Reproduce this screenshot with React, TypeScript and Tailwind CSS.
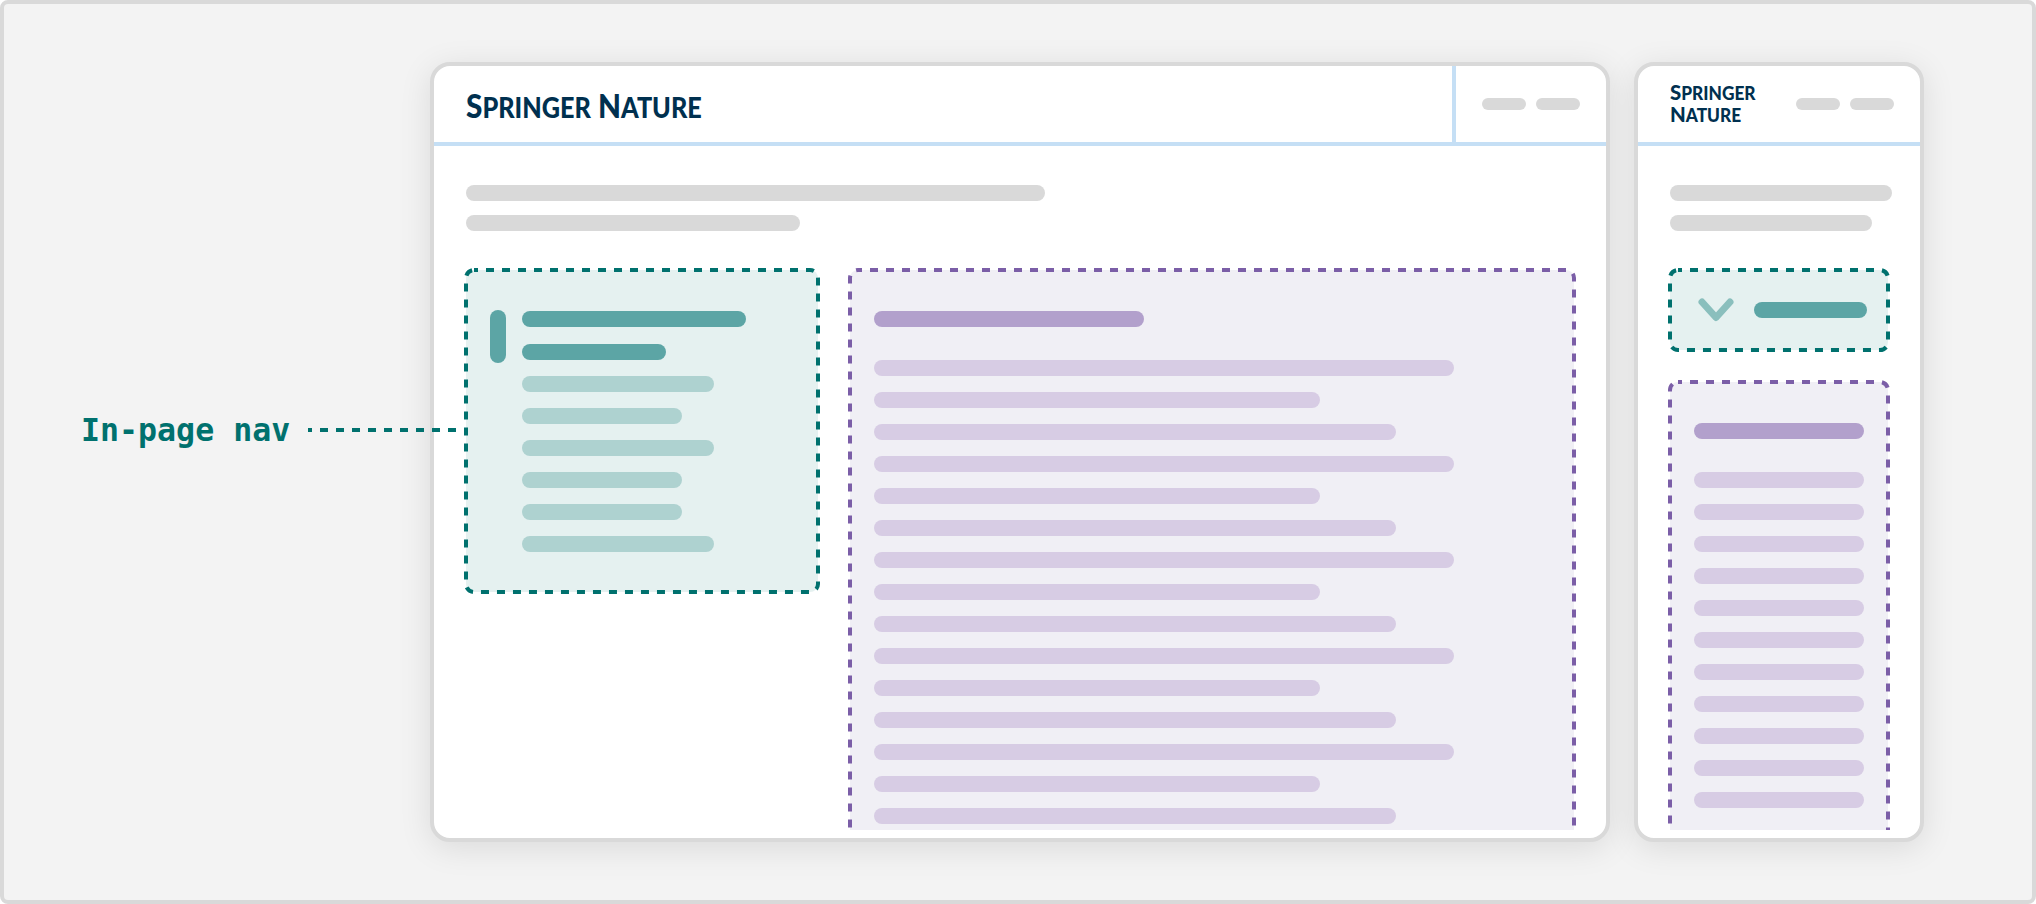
const teal = [192, 160, 192, 160, 160, 192]
const longLines = [580, 446, 522, 580, 446, 522, 580, 446, 522, 580, 446, 522, 580, 446, 522]
const shortLines = Array.from({ length: 11 }, () => 170)

// 8/8 dash stroke centred on the box edge, css dashed can't do this gap
function DashFrame({ color }: { color: string }) {
  return (
    <svg className="absolute inset-0 w-full h-full overflow-visible pointer-events-none" fill="none">
      <rect x="0" y="0" width="100%" height="100%" rx="8" stroke={color} strokeWidth="4" strokeDasharray="8 8" strokeDashoffset="4" />
    </svg>
  )
}

function Pills() {
  return (
    <div className="flex gap-[10px]">
      <div className="w-[44px] h-[12px] rounded-full bg-[#d9d9d9]" />
      <div className="w-[44px] h-[12px] rounded-full bg-[#d9d9d9]" />
    </div>
  )
}

function Wordmark({ big, small }: { big: string; small: string }) {
  return (
    <span>
      <span className="text-[1.18em]">{big}</span>
      {small}
    </span>
  )
}

function Intro({ first, second }: { first: number; second: number }) {
  return (
    <div className="flex flex-col gap-[14px] pt-[39px] pb-[39px]">
      <div className="h-[16px] rounded-full bg-[#d9d9d9]" style={{ width: first }} />
      <div className="h-[16px] rounded-full bg-[#d9d9d9]" style={{ width: second }} />
    </div>
  )
}

function Article({ lines, heading, className }: { lines: number[]; heading: number; className: string }) {
  return (
    <div className={`relative bg-[#f0eff5] rounded-lg pt-[41px] pb-10 px-6 ${className}`}>
      <DashFrame color="#7b5ea7" />
      <div className="h-[16px] rounded-full bg-[#b2a0cc] mb-[33px]" style={{ width: heading }} />
      <div className="flex flex-col gap-4">
        {lines.map((w, i) => (
          <div key={i} className="h-[16px] rounded-full bg-[#d7cce4]" style={{ width: w }} />
        ))}
      </div>
    </div>
  )
}

export default function App() {
  return (
    <div className="w-[2036px] h-[904px] box-border border-4 border-[#d9d9d9] rounded-lg bg-[#f3f3f3] flex py-[58px] overflow-hidden font-['Lato','Liberation_Sans',sans-serif]">
      {/* Label + connector, runs over the window edge */}
      <div className="w-[426px] shrink-0 relative z-10">
        <div className="flex items-center gap-[18px] pl-[77px] mt-[352px] h-[32px]">
          <span className="font-['DejaVu_Sans_Mono',monospace] font-bold text-[31.6px] leading-8 text-[#00716e] whitespace-nowrap">In-page nav</span>
          <svg width="156" height="4" className="shrink-0" fill="none">
            <line x1="0" y1="2" x2="156" y2="2" stroke="#00716e" strokeWidth="4" strokeDasharray="8 8" strokeDashoffset="4" />
          </svg>
        </div>
      </div>

      {/* Desktop window */}
      <div className="w-[1180px] shrink-0 box-border border-4 border-[#d9d9d9] rounded-[20px] bg-white flex flex-col pb-2 overflow-hidden shadow-[0_6px_32px_rgba(0,0,0,0.1)]">
        <div className="h-[80px] shrink-0 box-border border-b-4 border-[#c5dff5] flex">
          <div className="flex-1 pl-8 pt-[4px] flex items-center">
            <div className="font-black text-[28px] leading-none text-[#00304f] whitespace-nowrap origin-left scale-x-[0.9] flex gap-[8px]">
              <Wordmark big="S" small="PRINGER" />
              <Wordmark big="N" small="ATURE" />
            </div>
          </div>
          <div className="w-[154px] box-border border-l-4 border-[#c5dff5] flex items-center justify-center">
            <Pills />
          </div>
        </div>
        <div className="flex-1 min-h-0 overflow-hidden px-8">
          <Intro first={579} second={334} />
          <div className="flex items-start gap-8">
            <div className="relative w-[352px] h-[322px] shrink-0 bg-[#e5f1f0] rounded-lg pl-6 pt-[40px] flex gap-4">
              <DashFrame color="#00716e" />
              <div className="w-4 h-[53px] rounded-full bg-[#5ca5a5]" />
              <div className="flex flex-col">
                <div className="w-[224px] h-[16px] rounded-full bg-[#5ca5a5] mt-[1px]" />
                <div className="w-[144px] h-[16px] rounded-full bg-[#5ca5a5] mt-[17px]" />
                {teal.map((w, i) => (
                  <div key={i} className="h-[16px] rounded-full bg-[#aed2d0] mt-4" style={{ width: w }} />
                ))}
              </div>
            </div>
            <Article lines={longLines} heading={270} className="w-[724px] shrink-0" />
          </div>
        </div>
      </div>

      {/* Mobile window */}
      <div className="w-[290px] shrink-0 ml-6 box-border border-4 border-[#d9d9d9] rounded-[20px] bg-white flex flex-col pb-2 overflow-hidden shadow-[0_6px_32px_rgba(0,0,0,0.1)]">
        <div className="h-[80px] shrink-0 box-border border-b-4 border-[#c5dff5] flex items-center justify-between pl-8 pr-[26px]">
          <div className="font-black text-[18px] leading-[21px] text-[#00304f] whitespace-nowrap origin-left scale-x-[0.96]">
            <div><Wordmark big="S" small="PRINGER" /></div>
            <div><Wordmark big="N" small="ATURE" /></div>
          </div>
          <Pills />
        </div>
        <div className="flex-1 min-h-0 overflow-hidden px-8">
          <Intro first={222} second={202} />
          <div className="relative h-[80px] bg-[#e5f1f0] rounded-lg pl-7 flex items-center gap-5 mb-8">
            <DashFrame color="#00716e" />
            <svg width="36" height="24" viewBox="0 0 36 24" fill="none" className="shrink-0">
              <path d="M4 4 L18 19.5 L32 4" stroke="#8abfbd" strokeWidth="7" strokeLinecap="round" strokeLinejoin="round" />
            </svg>
            <div className="w-[113px] h-[16px] rounded-full bg-[#5ca5a5]" />
          </div>
          <Article lines={shortLines} heading={170} className="" />
        </div>
      </div>
    </div>
  )
}
